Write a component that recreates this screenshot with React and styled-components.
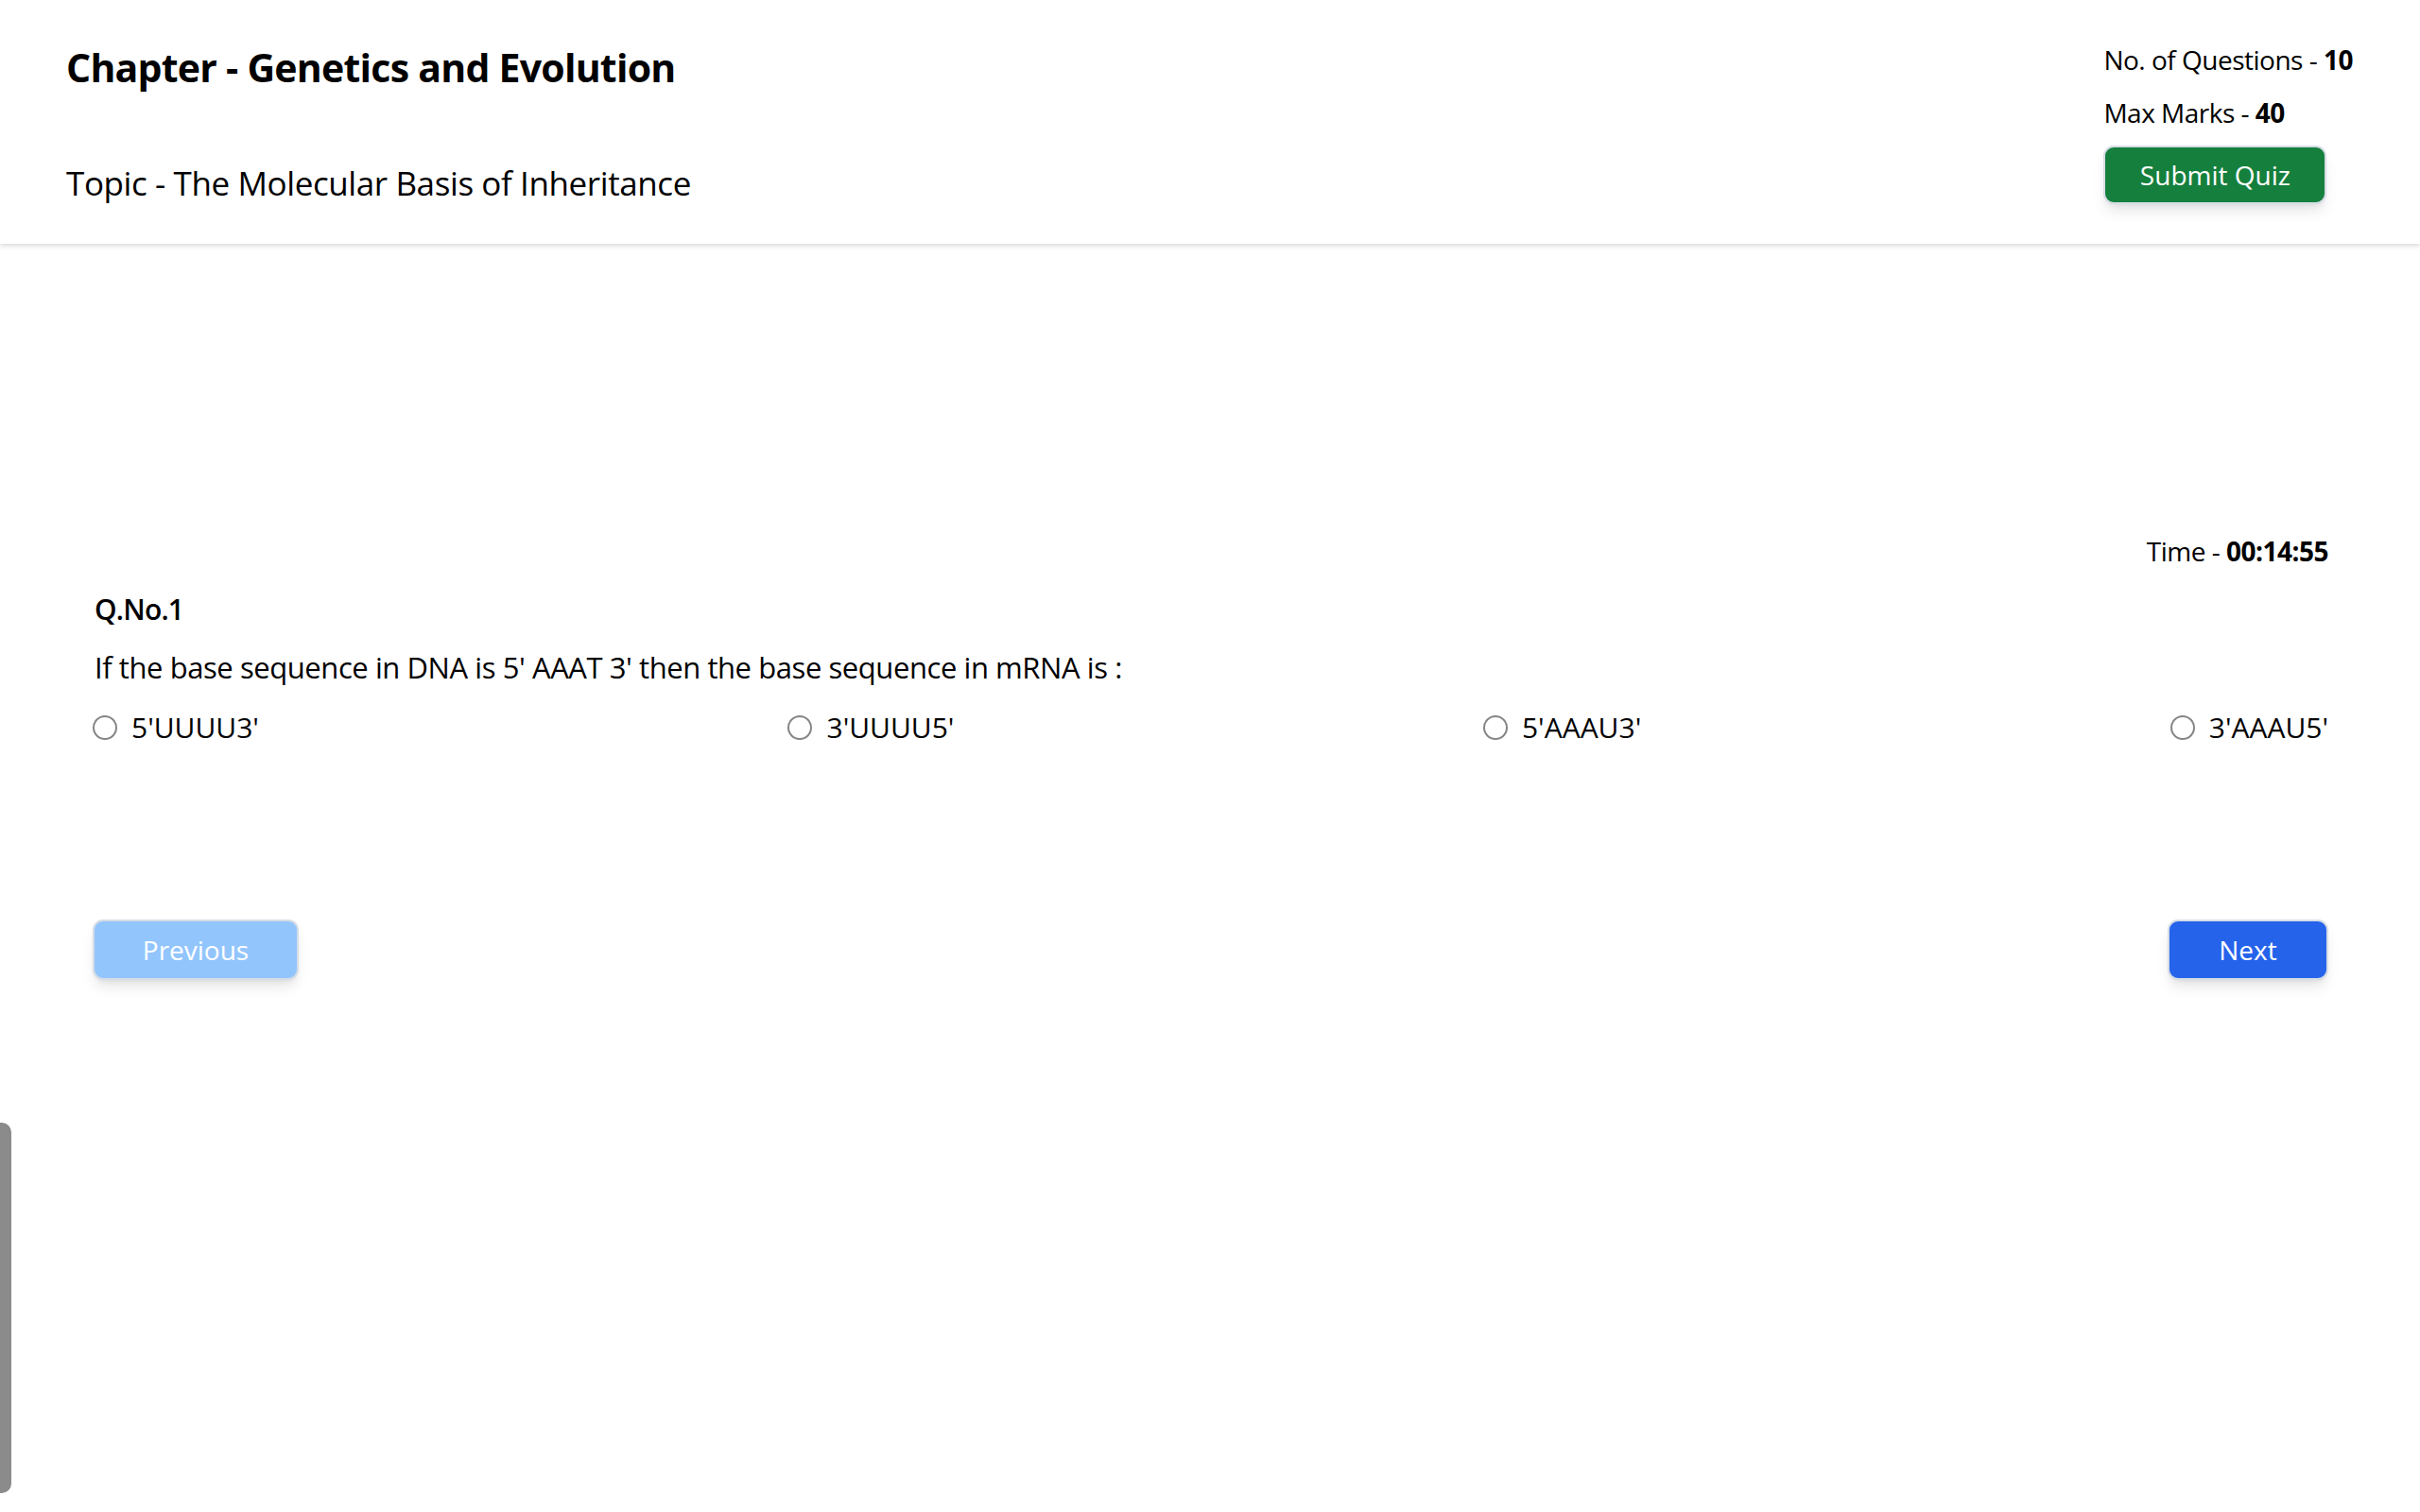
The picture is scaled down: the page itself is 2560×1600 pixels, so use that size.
import React from "react";
import styled, { createGlobalStyle } from "styled-components";

const Global = createGlobalStyle`
  html, body { margin: 0; padding: 0; background: #ffffff; }
  body { font-family: "Open Sans", "Noto Sans", sans-serif; color: #000; }
  * { box-sizing: border-box; }
`;

const Page = styled.div`
  min-height: 1600px;
  display: flex;
  flex-direction: column;
`;

const Header = styled.header`
  height: 258px;
  padding: 0 71px 0 70px;
  display: flex;
  justify-content: space-between;
  box-shadow: 0 2px 5px rgba(0, 0, 0, 0.16);
`;

const TitleCol = styled.div`
  display: flex;
  flex-direction: column;
  padding-top: 50px;
  gap: 84px;
`;

const Title = styled.h1`
  margin: 0;
  font-size: 41px;
  line-height: 42px;
  font-weight: 700;
  letter-spacing: -0.75px;
`;

const Topic = styled.h2`
  margin: 0;
  font-size: 35px;
  line-height: 35px;
  font-weight: 500;
  letter-spacing: -0.4px;
`;

const InfoCol = styled.div`
  display: flex;
  flex-direction: column;
  align-items: flex-start;
  padding-top: 49px;
`;

const Info = styled.p`
  margin: 0 0 28px;
  font-size: 28px;
  line-height: 28px;
  letter-spacing: -0.5px;
  &:last-of-type { margin-bottom: 21px; }
  b { font-weight: 700; }
`;

const Button = styled.button`
  height: ${(p) => p.$h || 64}px;
  width: ${(p) => p.$w}px;
  border: 2px solid #d6dde6;
  border-radius: 11px;
  background: ${(p) => p.$bg};
  color: #ffffff;
  font-family: inherit;
  font-size: 28px;
  line-height: 1;
  padding: 0;
  cursor: pointer;
  box-shadow: 0 10px 15px -3px rgba(0, 0, 0, 0.1), 0 4px 6px -4px rgba(0, 0, 0, 0.1);
`;

const Main = styled.main`
  padding: 311px 97px 0 98px;
  display: flex;
  flex-direction: column;
`;

const Timer = styled.div`
  align-self: flex-end;
  font-size: 28px;
  line-height: 28px;
  letter-spacing: -0.5px;
  b { font-weight: 700; }
`;

const QNo = styled.div`
  margin-top: 32px;
  margin-left: 2px;
  font-size: 30px;
  line-height: 31px;
  font-weight: 600;
  letter-spacing: -0.8px;
`;

const QText = styled.p`
  margin: 31px 0 0 2px;
  font-size: 31px;
  line-height: 31px;
  letter-spacing: -0.43px;
`;

const Options = styled.div`
  margin-top: 33px;
  display: flex;
  justify-content: space-between;
  align-items: center;
`;

const Option = styled.label`
  display: flex;
  align-items: center;
  gap: 15px;
  font-size: 30px;
  line-height: 30px;
  cursor: pointer;
`;

const Radio = styled.input.attrs({ type: "radio" })`
  appearance: none;
  margin: 0;
  width: 26px;
  height: 26px;
  border-radius: 50%;
  border: 2px solid #858585;
  background: #fff;
`;

const Nav = styled.div`
  margin-top: 188px;
  display: flex;
  justify-content: space-between;
`;

const ScrollThumb = styled.div`
  position: fixed;
  left: 0;
  top: 1188px;
  width: 12px;
  height: 392px;
  background: #8b8b8b;
  border-radius: 0 10px 10px 0;
`;

const options = ["5'UUUU3'", "3'UUUU5'", "5'AAAU3'", "3'AAAU5'"];

export default function App() {
  return (
    <Page>
      <Global />
      <Header>
        <TitleCol>
          <Title>Chapter - Genetics and Evolution</Title>
          <Topic>Topic - The Molecular Basis of Inheritance</Topic>
        </TitleCol>
        <InfoCol>
          <Info>
            No. of Questions - <b>10</b>
          </Info>
          <Info>
            Max Marks - <b>40</b>
          </Info>
          <Button $bg="#15803d" $w={236} $h={62}>
            Submit Quiz
          </Button>
        </InfoCol>
      </Header>
      <Main>
        <Timer>
          Time - <b>00:14:55</b>
        </Timer>
        <QNo>Q.No.1</QNo>
        <QText>
          If the base sequence in DNA is 5' AAAT 3' then the base sequence in mRNA is :
        </QText>
        <Options>
          {options.map((o) => (
            <Option key={o}>
              <Radio name="q1" />
              {o}
            </Option>
          ))}
        </Options>
        <Nav>
          <Button $bg="#93c5fd" $w={218}>
            Previous
          </Button>
          <Button $bg="#2563eb" $w={170}>
            Next
          </Button>
        </Nav>
      </Main>
      <ScrollThumb />
    </Page>
  );
}
